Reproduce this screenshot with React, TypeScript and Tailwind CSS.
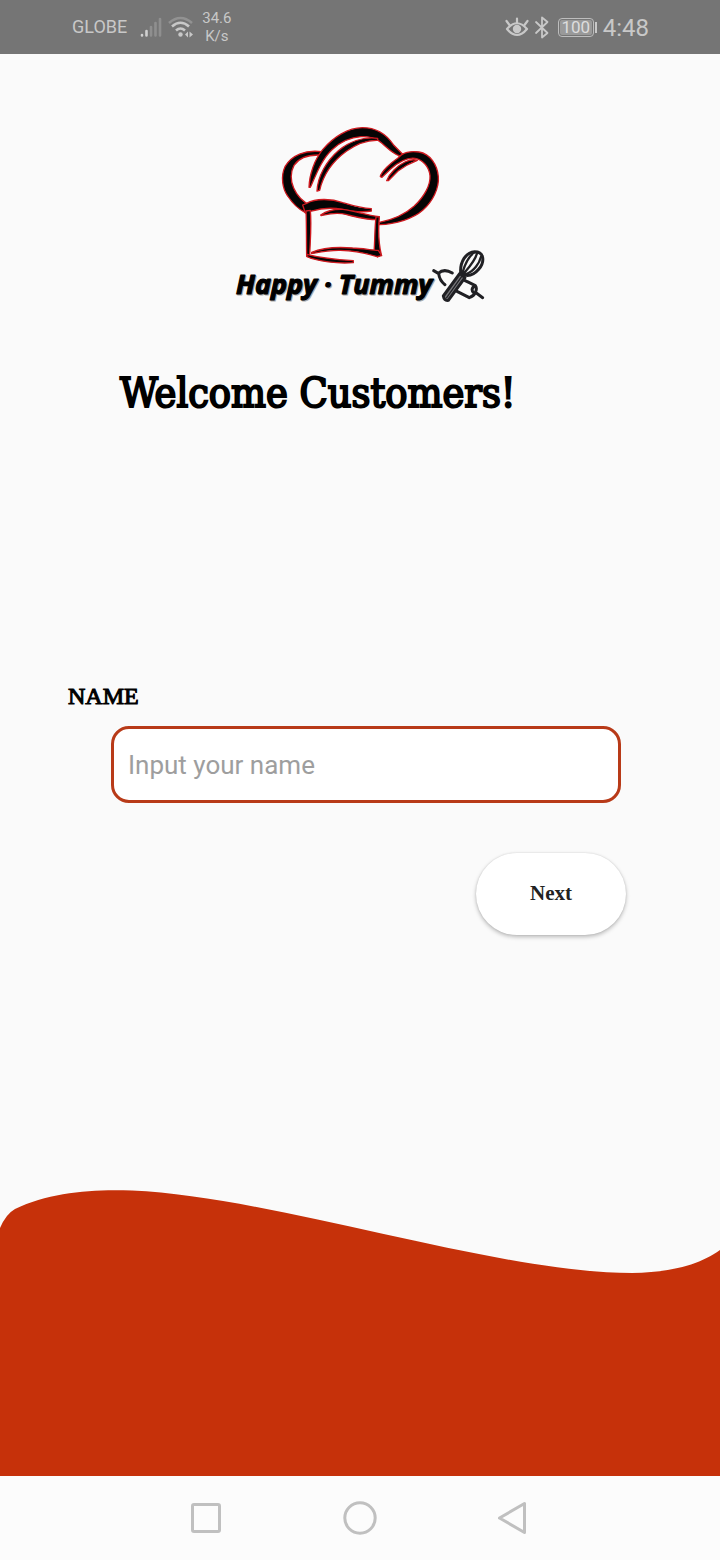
import React from 'react';

function SignalIcon() {
  return (
    <svg width="22" height="22" viewBox="0 0 22 22" aria-hidden="true">
      <g strokeWidth="2.600" strokeLinecap="round">
        <path d="M2 19v.5M6.500 15v4.500" stroke="#d0d0d0" />
        <path d="M11 11v8.500M15.500 7v12.500M20 3v16.500" stroke="#8f8f8f" />
      </g>
    </svg>
  );
}

function WifiIcon() {
  return (
    <svg width="26" height="22" viewBox="0 0 26 22" fill="none" aria-hidden="true">
      <path d="M1 7Q12.500 -3 24 7" stroke="#929292" strokeWidth="2.600" />
      <path d="M4 10.500Q12.500 3 21 10.500M8 14.500Q12.500 10.500 17 14.500" stroke="#c8c8c8" strokeWidth="2.600" />
      <circle cx="12.500" cy="18.500" r="2.200" fill="#c8c8c8" />
      <path d="M20 15.500v6l-3-3zM21.500 15.500v6l3.500-3z" fill="#c8c8c8" />
    </svg>
  );
}

function EyeIcon() {
  return (
    <svg width="24" height="22" viewBox="0 0 24 22" fill="none" stroke="#c8c8c8" strokeWidth="2.200" strokeLinecap="round" aria-hidden="true">
      <path d="M2 12Q12 .5 22 12Q12 24 2 12Z" strokeLinejoin="round" />
      <circle cx="12" cy="12" r="4.200" fill="#c8c8c8" stroke="none" />
      <path d="M12 1.500v4M1.500 4l3 4M22.500 4l-3 4" />
    </svg>
  );
}

function BluetoothIcon() {
  return (
    <svg width="16" height="24" viewBox="0 0 16 24" fill="none" stroke="#c8c8c8" strokeWidth="1.800" strokeLinejoin="round" strokeLinecap="round" aria-hidden="true">
      <path d="M2 6L13.500 17L8 21.500V1.500L13.500 6L2 17" />
    </svg>
  );
}

function StatusBar() {
  return (
    <header className="flex h-[54px] shrink-0 items-center justify-between bg-[#757575] pr-[71px] pl-[72px] text-[#c8c8c8]">
      <div className="flex items-center">
        <span className="mr-[13px] text-lg">GLOBE</span>
        <SignalIcon />
        <span className="mr-2 ml-[6px]"><WifiIcon /></span>
        <span className="text-center text-[15px] leading-[18px]">34.6<br />K/s</span>
      </div>
      <div className="flex items-center pt-px">
        <EyeIcon />
        <span className="mr-2 ml-[5px]"><BluetoothIcon /></span>
        <span className="flex items-center gap-px">
          <span className="flex h-[19px] w-9 items-center justify-center rounded border border-[#bdbdbd] p-px">
            <span className="flex h-full w-full items-center justify-center rounded-xs bg-[#999999] text-[17px] text-[#dddddd]">100</span>
          </span>
          <span className="h-[11px] w-0.5 bg-[#c8c8c8]" />
        </span>
        <span className="ml-[6px] text-2xl">4:48</span>
      </div>
    </header>
  );
}

function Logo() {
  return (
    <svg className="mx-auto block" width="270" height="195" viewBox="0 0 270 195" role="img" aria-label="Happy Tummy">
      <g transform="translate(45 0) scale(.33333)" fill="#050505" stroke="#cf1a20" strokeWidth="4" strokeLinejoin="round">
        <path d="M155 110C105 104 65 120 45 155C31 185 38 222 53 243C65 261 84 282 105 292L126 274C100 262 81 243 71 219C61 198 61 171 72 151C87 128 115 119 149 120Z" />
        <path d="M117 217C118 176 135 132 158 104C190 66 235 38 277 38C323 38 351 61 370 89L398 118L390 123C368 116 353 99 335 84C319 70 299 63 273 65C241 67 210 82 186 104C157 131 141 172 121 217Z" />
        <path d="M141 228C143 184 169 138 205 107C235 82 278 64 323 70V76C290 75 255 90 229 109C192 136 161 174 149 226Z" />
        <path d="M331 185C333 171 363 143 384 129C397 113 422 107 447 111C481 117 502 149 505 185C508 219 488 260 458 286C431 310 379 328 328 329V322C367 315 405 298 432 274C463 245 482 210 480 182C477 154 458 134 435 130C410 127 382 144 361 163L336 187Z" />
        <path d="M350 197C358 175 382 152 405 141C418 135 430 132 442 136C418 145 400 156 384 168L355 197Z" />
        <path d="M98 270L110 265C139 248 187 252 218 263C244 271 272 280 304 281L304 288C273 294 240 288 216 283C182 276 145 282 121 289L106 294Z" />
        <path d="M152 300C171 287 195 282 219 283C255 288 288 300 327 305V314C283 315 251 303 216 296C190 292 171 298 154 302Z" />
        <path d="M108 288L121 286C125 329 121 371 119 421L110 424C109 381 110 331 108 288Z" />
        <path d="M318 306L328 305C325 340 324 378 334 419L323 426L312 412C315 374 314 338 318 306Z" />
        <path d="M125 412C163 396 211 396 248 399C279 400 302 405 325 406L335 422L321 425C284 413 252 407 211 406C177 405 151 411 125 416Z" />
        <path d="M111 418C154 430 201 434 250 437V443C203 447 143 439 111 425Z" />
      </g>
      <g strokeLinejoin="round" strokeWidth="1.200" className="font-['Open_Sans',sans-serif] text-[27px] font-bold italic">
        <text x="12" y="180" fill="#aaaaaa" stroke="#aaaaaa">Happy · Tummy</text>
        <text x="11" y="179" fill="#000000" stroke="#000000">Happy · Tummy</text>
      </g>
      <g transform="translate(200 125) scale(.33333)" fill="none" stroke="#202024" strokeWidth="9" strokeLinecap="round" strokeLinejoin="round">
        <path d="M26 92L40 100C54 87 70 92 82 99M41 101C43 116 49 126 60 134M120 122L133 128M96 154L133 173C152 167 158 147 151 137L127 125M151 157L173 173M151 137C138 144 139 154 148 161" />
        <path d="M107 98C105 66 122 37 149 35C178 35 180 66 161 88C150 101 135 107 124 106Z" fill="#fafafa" />
        <path d="M113 96C119 76 130 50 147 38M118 99C134 80 153 58 156 39M124 102C147 94 163 70 168 50" strokeWidth="7" />
        <path d="M104 101L55 168Q58 183 70 181L120 113Z" fill="#77777b" />
        <path d="M112 107L65 173" strokeWidth="4" />
      </g>
    </svg>
  );
}

function Wave() {
  return (
    <svg className="mt-auto block h-[286px] w-full shrink-0" viewBox="0 0 720 286" preserveAspectRatio="none" aria-hidden="true">
      <path d="M0 38Q6 24 15 19C50 2 92 -1 132 .5C277 7 495 83 632 83C675 82 700 74 720 60V286H0Z" fill="#c6310a" />
    </svg>
  );
}

function NavigationBar() {
  return (
    <nav className="flex h-[84px] shrink-0 items-center justify-center gap-[118px] bg-[#fcfcfc]">
      <button type="button" aria-label="Recent apps">
        <svg width="36" height="36" viewBox="0 0 36 36" fill="none" stroke="#c0c0c0" strokeWidth="3">
          <rect x="4.500" y="4.500" width="27" height="27" rx="1.500" />
        </svg>
      </button>
      <button type="button" aria-label="Home">
        <svg width="36" height="36" viewBox="0 0 36 36" fill="none" stroke="#c0c0c0" strokeWidth="3">
          <circle cx="18" cy="18" r="15.200" />
        </svg>
      </button>
      <button type="button" aria-label="Back">
        <svg width="36" height="36" viewBox="0 0 36 36" fill="none" stroke="#c0c0c0" strokeWidth="3" strokeLinejoin="round">
          <path d="M28.500 3.500V32.500L3.500 18Z" />
        </svg>
      </button>
    </nav>
  );
}

export default function App() {
  return (
    <div className="flex min-h-screen flex-col bg-[#fafafa] font-['Roboto',sans-serif]">
      <StatusBar />
      <main className="flex grow flex-col pt-[61px]">
        <Logo />
        <h1 className="mt-[59px] pl-[120px] font-['DejaVu_Serif_Condensed','DejaVu_Serif',serif] text-[41px] leading-[48px] text-black [-webkit-text-stroke:2px_black]">
          Welcome Customers!
        </h1>
        <form className="mt-[263px] flex flex-col" onSubmit={(event) => event.preventDefault()}>
          <label htmlFor="name" className="pl-[68px] font-['Liberation_Serif',serif] text-2xl leading-8 text-black [-webkit-text-stroke:1px_black]">
            NAME
          </label>
          <input
            id="name"
            type="text"
            placeholder="Input your name"
            className="mt-[14px] mr-[99px] ml-[111px] h-[77px] rounded-[18px] border-3 border-[#b83a18] bg-white px-[14px] text-[26px] text-black outline-none placeholder:text-[#9e9e9e]"
          />
          <button
            type="submit"
            className="mt-[50px] mr-[94px] h-[82px] w-[150px] self-end rounded-full bg-white font-['Liberation_Serif',serif] text-[21px] font-bold text-[#222222] shadow-[0_2px_4px_rgba(0,0,0,0.26),0_0_2px_rgba(0,0,0,0.12)]"
          >
            Next
          </button>
        </form>
        <Wave />
      </main>
      <NavigationBar />
    </div>
  );
}
